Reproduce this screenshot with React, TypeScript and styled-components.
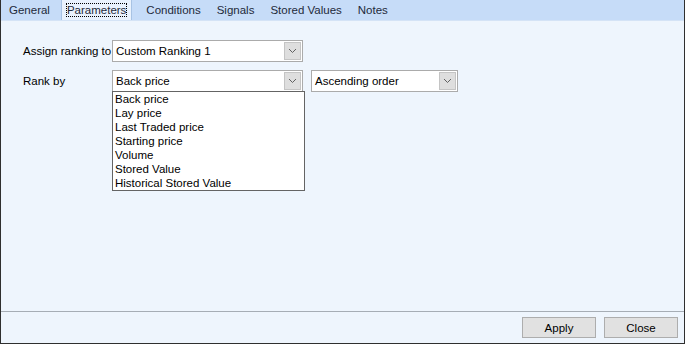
import styled, { createGlobalStyle } from 'styled-components';

const GlobalStyle = createGlobalStyle`
  body {
    margin: 0;
    font-family: 'Liberation Sans', Arial, sans-serif;
    font-size: 11.5px;
    color: #000;
  }
`;

const tabs = ['General', 'Parameters', 'Conditions', 'Signals', 'Stored Values', 'Notes'];
const rankOptions = [
  'Back price',
  'Lay price',
  'Last Traded price',
  'Starting price',
  'Volume',
  'Stored Value',
  'Historical Stored Value',
];

const Window = styled.div`
  width: 685px;
  height: 344px;
  box-sizing: border-box;
  display: flex;
  flex-direction: column;
  border-right: 1px solid #2f2f2f;
  border-bottom: 1px solid #2f2f2f;
  border-left: 1px solid #2f2f2f;
  background: #eef5fd;
`;

const TabStrip = styled.div`
  height: 21px;
  box-sizing: border-box;
  display: flex;
  align-items: stretch;
  background: #c6dcf8;
  border-bottom: 1px solid #d4e3f6;
`;

const Tab = styled.div<{ $active?: boolean }>`
  display: flex;
  align-items: center;
  padding: 0 ${(p) => (p.$active ? '4px' : '7px')};
  margin: ${(p) => (p.$active ? '0 6px 0 3px' : '0')};
  background: ${(p) => (p.$active ? '#e9f2fd' : 'transparent')};
  border-left: ${(p) => (p.$active ? '1px solid #a8c3e4' : 'none')};
  border-right: ${(p) => (p.$active ? '1px solid #a8c3e4' : 'none')};
  color: #1e2a3a;
  white-space: nowrap;

  &:first-child {
    padding-left: 7px;
  }
`;

const FocusLabel = styled.span<{ $focus?: boolean }>`
  padding: 1px 1px;
  outline: ${(p) => (p.$focus ? '1px dotted #000' : 'none')};
  outline-offset: -1px;
`;

const Content = styled.div`
  flex: 1;
  position: relative;
  padding: 19px 0 0 22px;
  border-bottom: 1px solid #a6adb5;
`;

const Form = styled.div`
  display: grid;
  grid-template-columns: 89px auto auto;
  row-gap: 8px;
  align-items: center;
  justify-content: start;
`;

const Label = styled.div`
  white-space: nowrap;
`;

const ComboWrap = styled.div<{ $span?: boolean; $gap?: number }>`
  position: relative;
  grid-column: ${(p) => (p.$span ? 'span 2' : 'auto')};
  margin-left: ${(p) => p.$gap ?? 0}px;
`;

const Combo = styled.div<{ $width: number }>`
  width: ${(p) => p.$width}px;
  height: 22px;
  box-sizing: border-box;
  display: flex;
  align-items: center;
  justify-content: space-between;
  background: #fff;
  border: 1px solid #ababab;
  padding: 0 1px 0 3px;
`;

const ArrowButton = styled.div`
  width: 17px;
  height: 18px;
  box-sizing: border-box;
  display: flex;
  align-items: center;
  justify-content: center;
  background: #dedede;
  border: 1px solid #c4c4c4;
`;

const DropList = styled.div`
  position: absolute;
  top: 21px;
  left: 0;
  width: 193px;
  box-sizing: border-box;
  background: #fff;
  border: 1px solid #646464;
  z-index: 2;
`;

const Option = styled.div`
  height: 14px;
  line-height: 14px;
  padding-left: 2px;
`;

const Footer = styled.div`
  height: 31px;
  display: flex;
  justify-content: flex-end;
  align-items: flex-start;
  gap: 8px;
  padding: 5px 6px 0 0;
  box-sizing: border-box;
`;

const Button = styled.button`
  width: 74px;
  height: 21px;
  background: #e1e1e1;
  border: 1px solid #adadad;
  font-family: 'Liberation Sans', Arial, sans-serif;
  font-size: 11.5px;
  color: #000;
  padding: 0;
`;

function Chevron() {
  return (
    <svg width="9" height="6" viewBox="0 0 9 6">
      <path d="M1 1 L4.5 4.5 L8 1" fill="none" stroke="#606060" strokeWidth="1" />
    </svg>
  );
}

function ComboBox({ value, width }: { value: string; width: number }) {
  return (
    <Combo $width={width}>
      <span>{value}</span>
      <ArrowButton>
        <Chevron />
      </ArrowButton>
    </Combo>
  );
}

export default function App() {
  return (
    <>
      <GlobalStyle />
      <Window>
        <TabStrip>
          {tabs.map((t) => (
            <Tab key={t} $active={t === 'Parameters'}>
              <FocusLabel $focus={t === 'Parameters'}>{t}</FocusLabel>
            </Tab>
          ))}
        </TabStrip>
        <Content>
          <Form>
            <Label>Assign ranking to</Label>
            <ComboWrap $span>
              <ComboBox value="Custom Ranking 1" width={191} />
            </ComboWrap>
            <Label>Rank by</Label>
            <ComboWrap>
              <ComboBox value="Back price" width={191} />
              <DropList>
                {rankOptions.map((o) => (
                  <Option key={o}>{o}</Option>
                ))}
              </DropList>
            </ComboWrap>
            <ComboWrap $gap={8}>
              <ComboBox value="Ascending order" width={147} />
            </ComboWrap>
          </Form>
        </Content>
        <Footer>
          <Button>Apply</Button>
          <Button>Close</Button>
        </Footer>
      </Window>
    </>
  );
}
